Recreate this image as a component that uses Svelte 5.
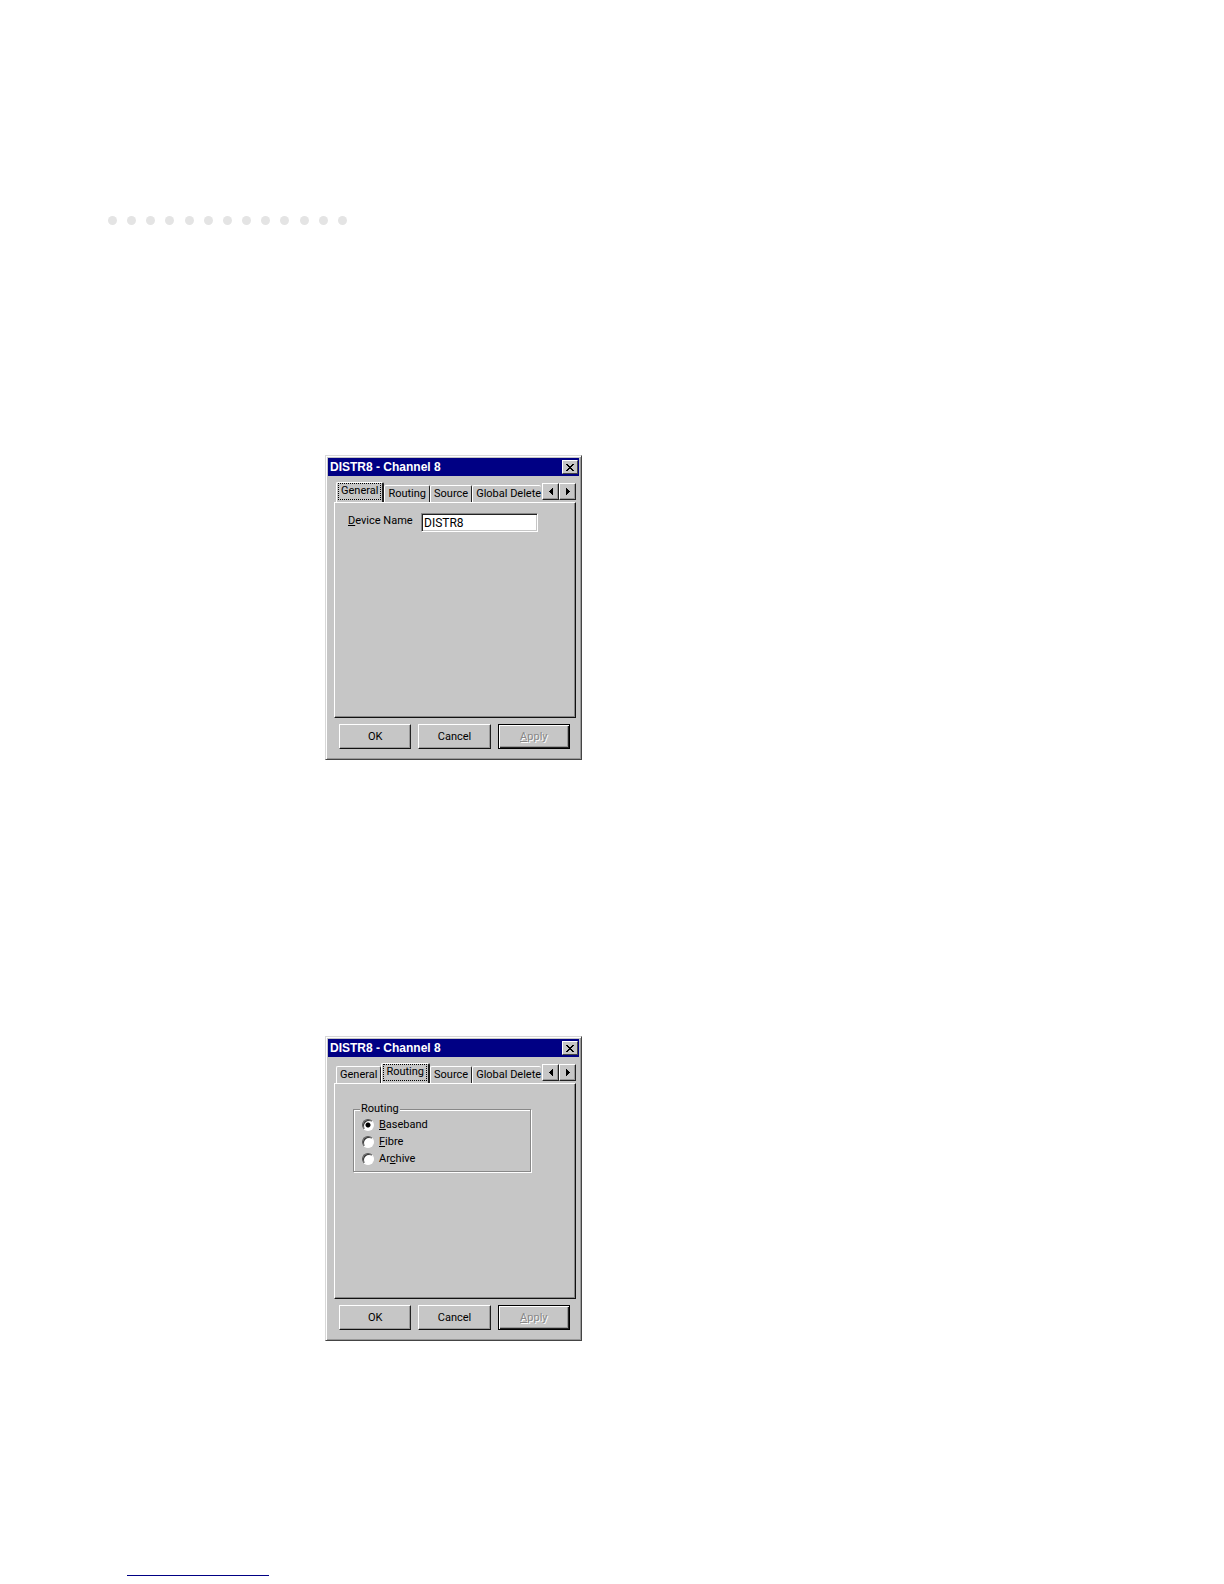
<script>
  const tabs = ['General', 'Routing', 'Source', 'Global Delete'];
  const dots = Array.from({ length: 13 });

  const routes = [
    { value: 'baseband', before: '', key: 'B', after: 'aseband' },
    { value: 'fibre', before: '', key: 'F', after: 'ibre' },
    { value: 'archive', before: 'Ar', key: 'c', after: 'hive' }
  ];

  let dialogs = $state([
    { id: 'first', active: 'General' },
    { id: 'second', active: 'Routing' }
  ]);
  let deviceName = $state('DISTR8');
  let route = $state('baseband');
</script>

<main>
  <div class="dots">
    {#each dots as _}
      <span class="dot"></span>
    {/each}
  </div>

  <div class="dialogs">
    {#each dialogs as dialog (dialog.id)}
      <section class="dialog" aria-label="DISTR8 - Channel 8">
        <header class="titlebar">
          <h2>DISTR8 - Channel 8</h2>
          <button class="close" aria-label="Close">
            <svg width="8" height="7" viewBox="0 0 8 7" shape-rendering="crispEdges">
              <path d="M0 0h2v1h1v1h2v-1h1v-1h2v1h-1v1h-1v1h-1v1h1v1h1v1h1v1h-2v-1h-1v-1h-2v1h-1v1h-2v-1h1v-1h1v-1h1v-1h-1v-1h-1v-1h-1z" />
            </svg>
          </button>
        </header>

        <div class="content">
          <div class="tab-row">
            <div class="tabs" role="tablist">
              {#each tabs as tab}
                <button
                  class="tab"
                  class:active={dialog.active === tab}
                  role="tab"
                  aria-selected={dialog.active === tab}
                  onclick={() => (dialog.active = tab)}
                >
                  <span>{tab}</span>
                </button>
              {/each}
            </div>
            <div class="scroller">
              <button aria-label="Scroll tabs left">
                <svg width="4" height="7" viewBox="0 0 4 7" shape-rendering="crispEdges">
                  <path d="M4 0v7h-1v-1h-1v-1h-1v-1h-1v-1h1v-1h1v-1h1v-1z" />
                </svg>
              </button>
              <button aria-label="Scroll tabs right">
                <svg width="4" height="7" viewBox="0 0 4 7" shape-rendering="crispEdges">
                  <path d="M0 0v7h1v-1h1v-1h1v-1h1v-1h-1v-1h-1v-1h-1v-1z" />
                </svg>
              </button>
            </div>
          </div>

          <div class="panel" role="tabpanel">
            {#if dialog.active === 'General'}
              <div class="field">
                <label for="name-{dialog.id}"><u>D</u>evice Name</label>
                <input id="name-{dialog.id}" type="text" bind:value={deviceName} />
              </div>
            {:else if dialog.active === 'Routing'}
              <fieldset>
                <legend>Routing</legend>
                {#each routes as item}
                  <label class="option">
                    <input type="radio" name="route-{dialog.id}" value={item.value} bind:group={route} />
                    <span>{item.before}<u>{item.key}</u>{item.after}</span>
                  </label>
                {/each}
              </fieldset>
            {/if}
          </div>

          <div class="actions">
            <button class="action">OK</button>
            <button class="action">Cancel</button>
            <button class="action" disabled><u>A</u>pply</button>
          </div>
        </div>
      </section>
    {/each}
  </div>

  <hr />
</main>

<style>
  :global(body) {
    background: #fff;
  }

  main,
  main * {
    box-sizing: border-box;
  }

  main {
    padding-top: 216px;
    font-family: Roboto, 'Liberation Sans', sans-serif;
    font-size: 11px;
    line-height: 14px;
    color: #000;
  }

  button,
  input {
    margin: 0;
    padding: 0;
    border: 0;
    border-radius: 0;
    font: inherit;
    color: inherit;
  }

  button {
    display: flex;
    align-items: center;
    justify-content: center;
    background: #c6c6c6;
  }

  .dots {
    display: flex;
    justify-content: space-between;
    width: 239px;
    margin-left: 108px;
  }

  .dot {
    width: 9px;
    height: 9px;
    border-radius: 50%;
    background: #e4e4e4;
  }

  .dialogs {
    display: flex;
    flex-direction: column;
    gap: 276px;
    margin: 230px 0 0 325px;
  }

  .dialog {
    width: 257px;
    padding: 2px;
    background: #c6c6c6;
    border: 1px solid;
    border-color: #d8d8d8 #444 #444 #d8d8d8;
    box-shadow: inset 1px 1px #fff, inset -1px -1px #999;
  }

  .titlebar {
    display: flex;
    align-items: center;
    justify-content: space-between;
    height: 18px;
    padding: 0 1px 0 2px;
    background: #000084;
    color: #fff;
  }

  h2 {
    margin: 0;
    font-family: 'Liberation Sans', sans-serif;
    font-size: 12px;
    font-weight: 700;
  }

  .close {
    width: 16px;
    height: 14px;
    border: 1px solid;
    border-color: #fff #444 #444 #fff;
    color: #000;
  }

  .content {
    padding: 6px 3px 8px 6px;
  }

  .tab-row {
    display: flex;
    align-items: flex-end;
    height: 20px;
  }

  .tabs {
    display: flex;
    flex: 1;
    align-items: flex-end;
    min-width: 0;
    height: 20px;
    padding-left: 2px;
    overflow: hidden;
  }

  .tab {
    flex: none;
    height: 17px;
    padding: 0 3px;
    border: 1px solid;
    border-color: #fff #222 transparent #fff;
    border-bottom: 0;
    border-radius: 2px 2px 0 0;
  }

  .tab:last-child {
    padding-right: 0;
    border-right: 0;
  }

  .tab.active {
    height: 20px;
    padding: 0 1px;
    align-items: flex-start;
    border-right-width: 2px;
  }

  .tab.active span {
    height: 17px;
    padding: 0 2px;
    border: 1px dotted #000;
  }

  .scroller {
    display: flex;
    align-self: flex-start;
    padding-top: 1px;
  }

  .scroller button {
    width: 17px;
    height: 17px;
    border: 1px solid;
    border-color: #fff #222 #222 #fff;
    box-shadow: inset -1px -1px #999;
  }

  .panel {
    height: 216px;
    padding: 10px 13px;
    border: 1px solid;
    border-color: #fff #111 #111 #fff;
    box-shadow: inset -1px -1px #888;
  }

  .field {
    display: flex;
    gap: 10px;
  }

  .field label {
    width: 63px;
    line-height: 16px;
    white-space: nowrap;
  }

  .field input {
    width: 117px;
    height: 19px;
    padding: 0 2px;
    font-size: 12px;
    background: #fff;
    border: 1px solid;
    border-color: #888 #fff #fff #888;
    box-shadow: inset 1px 1px #222, inset -1px -1px #c6c6c6;
  }

  fieldset {
    width: 178px;
    height: 70px;
    margin: 8px 0 0 5px;
    padding: 0 8px;
    border: 1px solid #888;
    box-shadow: 1px 1px #fff, inset 1px 1px #fff;
  }

  legend {
    padding: 0 1px;
    margin-left: -2px;
    background: #c6c6c6;
  }

  .option {
    display: flex;
    align-items: center;
    gap: 5px;
    height: 17px;
  }

  .option input {
    appearance: none;
    width: 12px;
    height: 12px;
    border: 1px solid;
    border-color: #555 #fff #fff #555;
    border-radius: 50%;
    background: #fff;
    box-shadow: inset 1px 1px #333;
  }

  .option input:checked {
    background: radial-gradient(circle, #000 2px, #fff 3px);
  }

  .actions {
    display: flex;
    gap: 7px;
    padding: 6px 6px 0 5px;
  }

  .action {
    flex: 1;
    height: 25px;
    border: 1px solid;
    border-color: #fff #222 #111 #fff;
    box-shadow: inset -1px -1px #999;
  }

  .action:disabled {
    color: #888;
    text-shadow: 1px 1px #fff;
    border-color: #000;
    box-shadow: inset 1px 1px #fff, inset -1px -1px #222, inset -2px -2px #999;
  }

  svg {
    display: block;
    fill: currentColor;
  }

  hr {
    width: 142px;
    height: 1px;
    margin: 234px 0 8px 127px;
    border: 0;
    background: #000084;
  }
</style>
